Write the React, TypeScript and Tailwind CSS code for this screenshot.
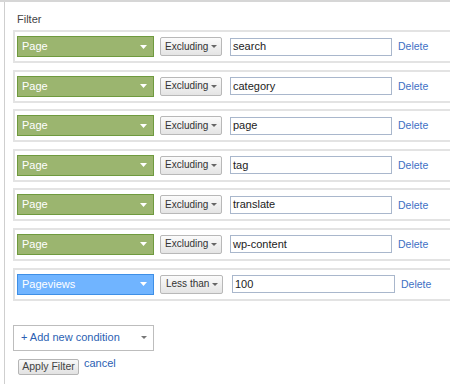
import React from 'react';

type Cond = { field: string; op: string; value: string; metric?: boolean };

const conditions: Cond[] = [
  { field: 'Page', op: 'Excluding', value: 'search' },
  { field: 'Page', op: 'Excluding', value: 'category' },
  { field: 'Page', op: 'Excluding', value: 'page' },
  { field: 'Page', op: 'Excluding', value: 'tag' },
  { field: 'Page', op: 'Excluding', value: 'translate' },
  { field: 'Page', op: 'Excluding', value: 'wp-content' },
  { field: 'Pageviews', op: 'Less than', value: '100', metric: true },
];

function Caret({ color, w = 7, h = 4 }: { color: string; w?: number; h?: number }) {
  return (
    <svg width={w} height={h} viewBox={`0 0 ${w} ${h}`} className="shrink-0">
      <polygon points={`0,0 ${w},0 ${w / 2},${h}`} fill={color} />
    </svg>
  );
}

function ConditionRow({ c }: { c: Cond }) {
  return (
    <div className="w-[470px] h-[33px] border-2 border-[#e3e3e3] flex items-center pl-[2px]">
      {/* dimension / metric picker */}
      <div
        className={
          c.metric
            ? 'w-[137px] h-[21px] bg-[#70b4ff] border border-[#3e8fe6] flex items-center justify-between pl-[4px] pr-[6px]'
            : 'w-[137px] h-[21px] bg-[#9bb56f] border border-[#6f9a3e] flex items-center justify-between pl-[4px] pr-[6px]'
        }
      >
        <span className="text-white text-[11px] leading-none">{c.field}</span>
        <Caret color="#ffffff" />
      </div>

      {/* operator button */}
      <div
        className={
          c.op === 'Less than'
            ? 'ml-[6px] w-[63px] h-[19px] rounded-[2px] border border-[#b8b8b8] bg-[linear-gradient(#fbfbfb,#e4e4e4)] flex items-center justify-between pl-[5px] pr-[4px]'
            : 'ml-[6px] w-[62px] h-[19px] rounded-[2px] border border-[#b8b8b8] bg-[linear-gradient(#fbfbfb,#e4e4e4)] flex items-center justify-between pl-[4px] pr-[4px]'
        }
      >
        <span className="text-[#333] text-[10px] leading-none whitespace-nowrap">{c.op}</span>
        <Caret color="#666666" w={6} h={3} />
      </div>

      {/* value */}
      <div
        className={
          c.metric
            ? 'ml-[9px] w-[163px] h-[18px] border border-[#a9b7cc] flex items-center pl-[2px]'
            : 'ml-[8px] w-[162px] h-[18px] border border-[#a9b7cc] flex items-center pl-[2px]'
        }
      >
        <span className="text-[#222] text-[11px] leading-none">{c.value}</span>
      </div>

      <span className="ml-[6px] text-[#4070c4] text-[10.5px] leading-none">Delete</span>
    </div>
  );
}

export default function App() {
  return (
    <div
      className="w-[450px] h-[384px] bg-white overflow-hidden border-t-2 border-[#d6d6d6]"
      style={{ fontFamily: '"Liberation Sans", Arial, sans-serif' }}
    >
      <div className="ml-[4px] h-full border-l border-[#cfcfcf] pl-[8px]">
        <div className="pt-[12px] pl-[4px] text-[11px] leading-none text-[#444]">Filter</div>

        <div className="mt-[5px] flex flex-col gap-[6.6px]">
          {conditions.map((c, i) => (
            <ConditionRow key={i} c={c} />
          ))}
        </div>

        {/* add condition */}
        <div className="mt-[24px] w-[141px] h-[26px] border border-[#bdbdbd] flex items-center justify-between pl-[7px] pr-[6px]">
          <span className="text-[#2b5fb3] text-[11px] leading-none">+ Add new condition</span>
          <Caret color="#777777" w={6} h={3} />
        </div>

        <div className="mt-[8px] pl-[5px] flex items-start gap-[5px]">
          <div className="w-[61px] h-[16px] rounded-[2px] border border-[#b5b5b5] bg-[linear-gradient(#f9f9f9,#e2e2e2)] flex items-center justify-center">
            <span className="text-[#444] text-[10.5px] leading-none whitespace-nowrap">Apply Filter</span>
          </div>
          <span className="text-[#2b5fb3] text-[11px] leading-none -mt-[1px]">cancel</span>
        </div>
      </div>
    </div>
  );
}
